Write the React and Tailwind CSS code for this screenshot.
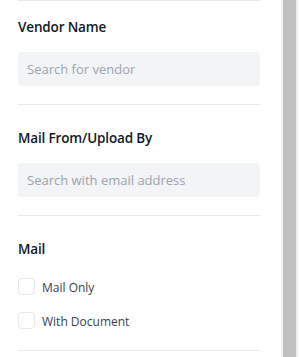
import React from 'react';

function Section({ title, children, className = '' }) {
  return (
    <div className={`border-t border-[#e5e7eb] ${className}`}>
      <h3 className="text-[13.5px] leading-5 font-semibold tracking-[-0.15px] text-[#111827]">{title}</h3>
      {children}
    </div>
  );
}

function SearchInput({ placeholder }) {
  return (
    <input
      type="text"
      placeholder={placeholder}
      className="mt-[15px] block w-full h-[34px] rounded bg-[#f3f4f6] px-[9px] text-[13px] text-gray-700 placeholder:text-[#9ca3af] outline-none"
    />
  );
}

function Check({ label }) {
  return (
    <label className="flex items-center gap-[7px] h-[17px]">
      <span className="w-[17px] h-[17px] rounded border border-[#e5e7eb] bg-white" />
      <span className="text-[12px] leading-4 pt-[2px] text-[#374151]">{label}</span>
    </label>
  );
}

export default function App() {
  return (
    <div
      className="flex w-[300px] h-[357px] bg-white overflow-hidden"
      style={{ fontFamily: '"Open Sans", "Noto Sans", sans-serif' }}
    >
      <div className="w-[281px] pl-[18px] pr-[21px]">
        <Section title="Vendor Name" className="pt-[16px] pb-[18px]">
          <SearchInput placeholder="Search for vendor" />
        </Section>
        <Section title="Mail From/Upload By" className="pt-[23px] pb-[18px]">
          <SearchInput placeholder="Search with email address" />
        </Section>
        <Section title="Mail" className="pt-[23px] pb-[21px]">
          <div className="mt-[19px] flex flex-col gap-[17px]">
            <Check label="Mail Only" />
            <Check label="With Document" />
          </div>
        </Section>
        <div className="border-t border-[#e5e7eb]" />
      </div>
      <div className="w-[17px] h-full bg-[#f1f1f1] px-[2px]">
        <div className="w-full h-full bg-[#c1c1c1]" />
      </div>
    </div>
  );
}
